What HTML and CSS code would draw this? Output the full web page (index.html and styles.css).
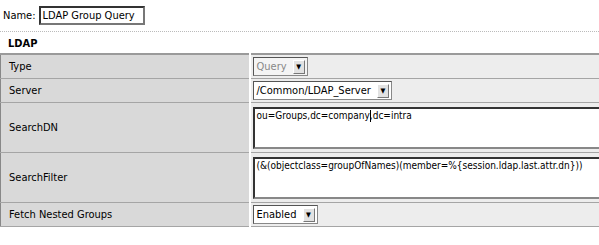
FILE: index.html
```html
<!DOCTYPE html>
<html lang="en">
<head>
    <meta charset="UTF-8">
    <title>LDAP Group Query</title>
    <link rel="stylesheet" href="styles.css">
</head>
<body>
    <div class="page">
        <div class="name-row">
            <label for="name-input">Name:</label>
            <div class="text-box" id="name-input">LDAP Group Query</div>
        </div>
        <div class="section">
            <h3>LDAP</h3>
            <table class="props">
                <colgroup>
                    <col class="col-label">
                    <col>
                </colgroup>
                <tr class="row-short">
                    <td class="label">Type</td>
                    <td class="value">
                        <div class="fake-select disabled"><span class="sel-text">Query</span><span class="sel-btn">&#9660;</span></div>
                    </td>
                </tr>
                <tr class="row-short">
                    <td class="label">Server</td>
                    <td class="value">
                        <div class="fake-select"><span class="sel-text">/Common/LDAP_Server</span><span class="sel-btn">&#9660;</span></div>
                    </td>
                </tr>
                <tr class="row-tall">
                    <td class="label">SearchDN</td>
                    <td class="value">
                        <div class="text-area">ou=Groups,dc=company<span class="caret"></span>,dc=intra</div>
                    </td>
                </tr>
                <tr class="row-tall">
                    <td class="label">SearchFilter</td>
                    <td class="value">
                        <div class="text-area">(&amp;(objectclass=groupOfNames)(member=%{session.ldap.last.attr.dn}))</div>
                    </td>
                </tr>
                <tr class="row-short">
                    <td class="label">Fetch Nested Groups</td>
                    <td class="value">
                        <div class="fake-select"><span class="sel-text">Enabled</span><span class="sel-btn">&#9660;</span></div>
                    </td>
                </tr>
            </table>
        </div>
    </div>
</body>
</html>
```

FILE: styles.css
```css
html, body {
    margin: 0;
    padding: 0;
    background: #fff;
    overflow: hidden;
}
body {
    font-family: "DejaVu Sans Condensed", "DejaVu Sans", sans-serif;
    font-size: 11px;
    color: #000;
}
.page {
    width: 599px;
    overflow: hidden;
}
.name-row {
    display: flex;
    align-items: center;
    gap: 3px;
    padding: 6px 3px 6px 3px;
    border-bottom: 1px dotted #bbb;
}
.text-box {
    width: 98px;
    height: 15px;
    line-height: 15px;
    padding: 0 2px;
    border: 2px solid #333;
    border-right-color: #777;
    border-bottom-color: #777;
    white-space: nowrap;
}
.section h3 {
    margin: 0;
    padding: 5px 8px 3px;
    font-size: 11px;
    font-weight: bold;
}
.props {
    border-collapse: collapse;
    table-layout: fixed;
    width: 700px;
    border-top: 2px solid #9a9a9a;
    border-left: 1px solid #888;
}
.col-label {
    width: 249px;
}
.props td {
    border-top: 1px solid #fff;
    border-bottom: 1px solid #a5a5a5;
    padding: 0;
    vertical-align: middle;
}
.props .label {
    padding-left: 8px;
    background: #d9d9d9;
    border-right: 1px solid #a0a0a0;
    white-space: nowrap;
}
.props .value {
    background: #ededed;
    padding: 2px 0 2px 2px;
    border-left: 2px solid #fff;
}
.row-short td {
    height: 18px;
}
.row-tall .value {
    padding: 4px 0 3px 2px;
}
.fake-select {
    display: inline-flex;
    align-items: center;
    height: 15px;
    padding: 1px 2px 1px 3px;
    border: 1px solid #888;
    border-top-color: #555;
    border-left-color: #555;
    background: #fff;
    gap: 6px;
}
.fake-select.disabled {
    color: #888;
    background: #f4f4f4;
}
.sel-text {
    white-space: nowrap;
}
.sel-btn {
    display: inline-flex;
    align-items: center;
    justify-content: center;
    width: 10px;
    height: 12px;
    font-size: 7px;
    color: #000;
    background: #e2e2e2;
    border: 1px solid #fff;
    border-right-color: #777;
    border-bottom-color: #777;
}
.text-area {
    width: 420px;
    height: 36px;
    padding: 1px 2px;
    font-size: 10px;
    background: #fff;
    border: 2px solid #333;
    border-right-color: #888;
    border-bottom-color: #888;
    white-space: nowrap;
}
.caret {
    display: inline-block;
    width: 0;
    height: 12px;
    vertical-align: -3px;
    border-left: 1px solid #000;
    margin-right: -1px;
}
```
